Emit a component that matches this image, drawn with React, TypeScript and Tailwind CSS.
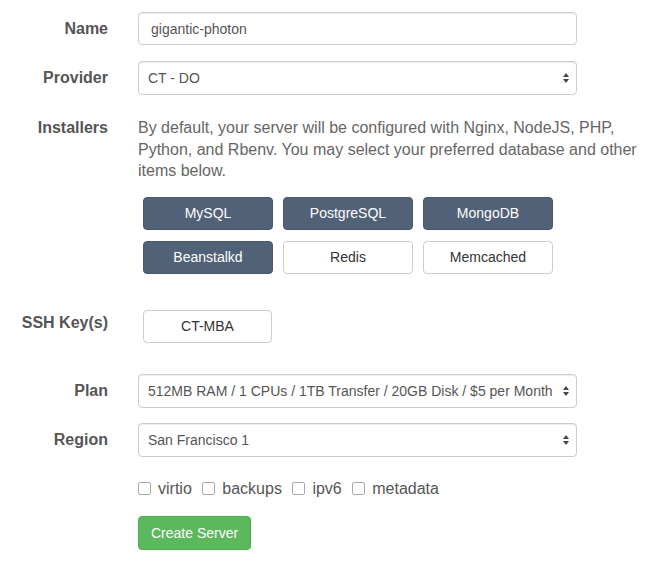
import React from "react";

const installers = [
  { name: "MySQL", on: true },
  { name: "PostgreSQL", on: true },
  { name: "MongoDB", on: true },
  { name: "Beanstalkd", on: true },
  { name: "Redis", on: false },
  { name: "Memcached", on: false },
];

const options = ["virtio", "backups", "ipv6", "metadata"];

function Arrows() {
  return (
    <svg width="6" height="10" viewBox="0 0 6 10" className="absolute right-[8px] top-1/2 -translate-y-1/2 pointer-events-none">
      <path d="M3 0 L6 4 L0 4 Z" fill="#444" />
      <path d="M3 10 L6 6 L0 6 Z" fill="#444" />
    </svg>
  );
}

function Select({ value }: { value: string }) {
  return (
    <div className="relative w-[439px]">
      <select
        defaultValue={value}
        className="w-full h-[34px] appearance-none rounded border border-[#ccc] bg-white pl-[9px] pr-6 text-sm text-[#555] shadow-[inset_0_1px_1px_rgba(0,0,0,0.075)] outline-none"
      >
        <option>{value}</option>
      </select>
      <Arrows />
    </div>
  );
}

function Label({ children }: { children: React.ReactNode }) {
  return (
    <div className="w-[108px] shrink-0 text-right text-base font-bold leading-[22px] text-[#555]">
      {children}
    </div>
  );
}

export default function App() {
  return (
    <div className="min-h-[561px] bg-white pt-3 font-['Liberation_Sans',Arial,sans-serif]">
      <div className="flex items-center gap-[30px]">
        <Label>Name</Label>
        <input
          defaultValue="gigantic-photon"
          className="w-[439px] h-[33px] rounded border border-[#ccc] bg-white px-3 text-sm text-[#555] shadow-[inset_0_1px_1px_rgba(0,0,0,0.075)] outline-none"
        />
      </div>

      <div className="mt-4 flex items-center gap-[30px]">
        <Label>Provider</Label>
        <Select value="CT - DO" />
      </div>

      <div className="mt-[22px] flex items-start gap-[30px]">
        <Label>Installers</Label>
        <div className="w-[504px]">
          <p className="text-base leading-[21.5px] text-[#666]">
            By default, your server will be configured with Nginx, NodeJS, PHP,
            Python, and Rbenv. You may select your preferred database and other
            items below.
          </p>
          <div className="mt-[15px] ml-[5px] grid grid-cols-[130px_130px_130px] gap-x-[10px] gap-y-[11px]">
            {installers.map((item) => (
              <button
                key={item.name}
                className={
                  item.on
                    ? "h-[33px] rounded border border-[#4a596d] bg-[#506178] text-sm text-white"
                    : "h-[33px] rounded border border-[#ccc] bg-white text-sm text-[#333]"
                }
              >
                {item.name}
              </button>
            ))}
          </div>
        </div>
      </div>

      <div className="mt-9 flex items-start gap-[35px]">
        <div className="mt-[2px]">
          <Label>SSH Key(s)</Label>
        </div>
        <button className="h-[33px] w-[129px] rounded border border-[#ccc] bg-white text-sm text-[#333]">
          CT-MBA
        </button>
      </div>

      <div className="mt-[31px] flex items-center gap-[30px]">
        <Label>Plan</Label>
        <Select value="512MB RAM / 1 CPUs / 1TB Transfer / 20GB Disk / $5 per Month" />
      </div>

      <div className="mt-[15px] flex items-center gap-[30px]">
        <Label>Region</Label>
        <Select value="San Francisco 1" />
      </div>

      <div className="mt-[21px] ml-[138px] flex items-center text-base leading-[22px] text-[#555]">
        {options.map((opt) => (
          <label key={opt} className="mr-[10.5px] flex items-center">
            <span className="mr-[7px] inline-block h-[13px] w-[13px] rounded-[2px] border border-[#aaa] bg-white" />
            {opt}
          </label>
        ))}
      </div>

      <div className="mt-4 ml-[138px]">
        <button className="h-[34px] rounded border border-[#4cae4c] bg-[#5cb85c] px-3 text-sm text-white">
          Create Server
        </button>
      </div>
    </div>
  );
}
